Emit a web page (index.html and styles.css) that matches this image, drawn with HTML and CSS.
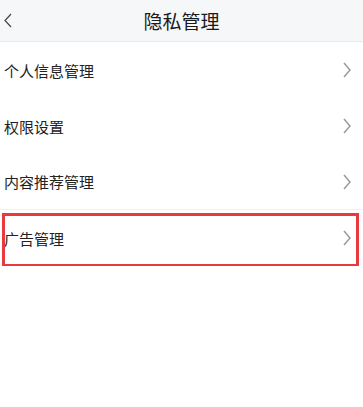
FILE: index.html
```html
<!DOCTYPE html>
<html lang="zh-CN">
<head>
    <meta charset="UTF-8">
    <meta name="viewport" content="width=device-width, initial-scale=1.0">
    <title>隐私管理</title>
    <link rel="stylesheet" href="styles.css">
</head>
<body>
    <div class="header">
        <svg class="back" width="16" height="20" viewBox="0 0 16 20">
            <polyline points="11,3 5,9.5 11,16" fill="none" stroke="#444" stroke-width="1.2"/>
        </svg>
        <h1>隐私管理</h1>
    </div>
    <ul class="menu">
        <li class="item"><span>个人信息管理</span><svg class="arrow" width="8" height="16" viewBox="0 0 8 16"><polyline points="1,1 7,8 1,15" fill="none" stroke="#9a9a9a" stroke-width="1.5"/></svg></li>
        <li class="item"><span>权限设置</span><svg class="arrow" width="8" height="16" viewBox="0 0 8 16"><polyline points="1,1 7,8 1,15" fill="none" stroke="#9a9a9a" stroke-width="1.5"/></svg></li>
        <li class="item line"><span>内容推荐管理</span><svg class="arrow" width="8" height="16" viewBox="0 0 8 16"><polyline points="1,1 7,8 1,15" fill="none" stroke="#9a9a9a" stroke-width="1.5"/></svg></li>
        <li class="item marked"><span>广告管理</span><svg class="arrow" width="8" height="16" viewBox="0 0 8 16"><polyline points="1,1 7,8 1,15" fill="none" stroke="#9a9a9a" stroke-width="1.5"/></svg></li>
    </ul>
</body>
</html>
```

FILE: styles.css
```css
body {
    margin: 0;
    background-color: #fff;
    color: #222;
    font-family: "Noto Sans CJK SC", "Noto Sans", sans-serif;
}
.header {
    position: relative;
    height: 41px;
    background-color: #f6f7f9;
    border-bottom: 1px solid #e9eaec;
    display: flex;
    align-items: center;
    justify-content: center;
}
.header h1 {
    margin: 0;
    font-size: 19px;
    font-weight: normal;
    color: #1a1a1a;
}
.back {
    position: absolute;
    left: 0;
    top: 11px;
}
.menu {
    list-style: none;
    margin: 0;
    padding: 0;
}
.item {
    position: relative;
    height: 56px;
    display: flex;
    align-items: center;
    justify-content: space-between;
    padding: 0 12px 0 4px;
    font-size: 15px;
}
.item.line {
    border-bottom: 1px solid #f0f0f0;
    height: 55px;
}
.marked::after {
    content: "";
    position: absolute;
    left: 2px;
    right: 4px;
    top: 3px;
    bottom: -1px;
    border: 3px solid #e8393e;
}
```
